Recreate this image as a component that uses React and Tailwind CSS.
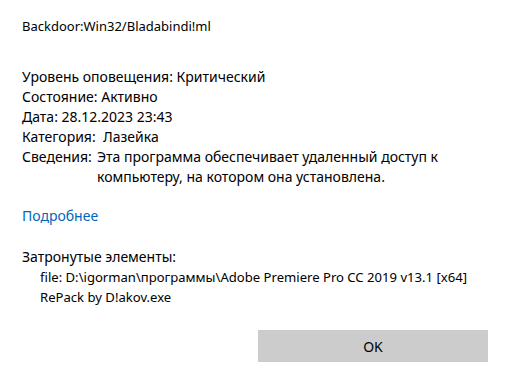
export default function App() {
  return (
    <div className="w-[512px] h-[380px] bg-white text-black overflow-hidden" style={{ fontFamily: '"Noto Sans", "Open Sans", sans-serif' }}>
      <div className="pl-[22px] pt-[16px] text-[14px] leading-[20px]">
        <div className="text-[13px]">Backdoor:Win32/Bladabindi!ml</div>
        <div className="mt-[31px]">
          <div>Уровень оповещения: Критический</div>
          <div>Состояние: Активно</div>
          <div>Дата: 28.12.2023 23:43</div>
          <div>Категория:&nbsp; Лазейка</div>
          <div className="flex">
            <div className="w-[75px] shrink-0">Сведения:</div>
            <div className="w-[360px]">Эта программа обеспечивает удаленный доступ к компьютеру, на котором она установлена.</div>
          </div>
        </div>
        <div className="mt-[19px] text-[#0067c0]">Подробнее</div>
        <div className="mt-[21px]">Затронутые элементы:</div>
        <div className="pl-[18px]">
          <div className="whitespace-nowrap text-[13.1px]">file: D:\igorman\программы\Adobe Premiere Pro CC 2019 v13.1 [x64]</div>
          <div className="text-[13.1px]">RePack by D!akov.exe</div>
        </div>
      </div>
      <div className="flex justify-end pr-[24px] mt-[23px]">
        <div className="w-[230px] h-[32px] bg-[#cccccc] flex items-center justify-center text-[14px]">OK</div>
      </div>
    </div>
  );
}
